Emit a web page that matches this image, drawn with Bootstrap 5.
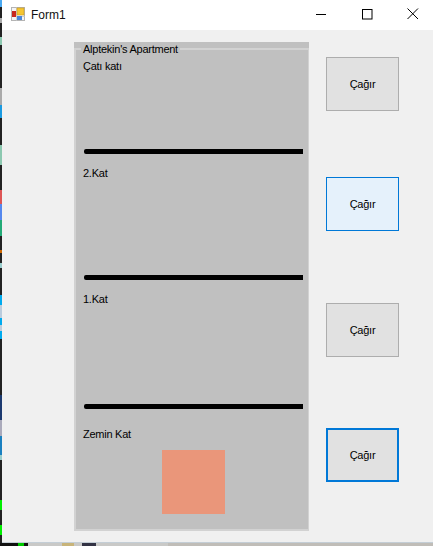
<!DOCTYPE html>
<html lang="tr">
<head>
<meta charset="utf-8">
<title>Form1</title>
<link href="https://cdn.jsdelivr.net/npm/bootstrap@5.3.0/dist/css/bootstrap.min.css" rel="stylesheet">
<style>
html,body{margin:0;height:546px;overflow:hidden;background:#f0f0f0;}
body{font-family:"Liberation Sans",Arial,sans-serif;font-size:11px;color:#000;line-height:13px;letter-spacing:-.25px;}
.shot{width:433px;height:546px;}
.upper{height:543px;flex:none;}
.edge-strip{width:2px;flex:none;background:linear-gradient(180deg,#4aa8f0 0 7px,#222 7px 18px,#aaa 18px 23px,#222 23px 37px,#8cc8b0 37px 45px,#222 45px 88px,#aaa 88px 105px,#1a9ae0 105px 118px,#222 118px 145px,#8cc8b0 145px 165px,#222 165px 190px,#d55 190px 204px,#58e 204px 220px,#2a7 220px 236px,#222 236px 250px,#c60 250px 253px,#222 253px 263px,#9cc 263px 268px,#222 268px 295px,#0ae 295px 305px,#bcd 305px 318px,#0ae 318px 325px,#bcd 325px 331px,#0ae 331px 339px,#222 339px 395px,#1c3a70 395px 420px,#aab 420px 436px,#1a80c0 436px 455px,#9cc 455px 460px,#222 460px 500px,#0e0 500px 510px,#222 510px 525px,#0e0 525px 535px,#222 535px);}
.win{flex:1;min-width:0;border-bottom:1px solid #c4ced6;}
.tbar{height:30px;background:#fff;flex:none;}
.tbar-name{font-size:12px;margin-left:5px;color:#111;letter-spacing:0;}
.tbar-ico{margin:0 0 2px 8px;}
.tbar-ctrls{margin-right:-3px;align-self:flex-start;}
.wbtn{width:46px;height:28px;}
.client{flex:1;background:#f0f0f0;}
.foot-strip{height:3px;flex:none;background:linear-gradient(90deg,#111 0 18px,#0c0 18px 24px,#111 24px 28px,#c9c9c7 28px 62px,#c8b47a 62px 74px,#c9c9c7 74px 82px,#334 82px 96px,#c9c9c7 96px 168px,#c0bdb8 168px);}
.apt{width:235px;height:489px;margin:12px 0 0 72px;background:#c0c0c0;position:relative;flex:none;padding:0 6px 0 8px;}
.apt-frame{position:absolute;inset:6px 0 0 0;border:2px solid #d2d2d2;border-right-width:1px;pointer-events:none;}
.apt-title{position:absolute;left:7px;top:0;padding:0 2px;background:#c0c0c0;line-height:14px;}
.story{display:flex;flex-direction:column;}
.story-a{height:112px;padding-top:18px;}
.story-b{height:126px;padding-top:13px;}
.story-c{height:129px;padding-top:13px;}
.story-d{padding-top:19px;}
.floorline{height:5px;background:#000;border-radius:2px 0 0 2px;margin:auto 0 0 2px;flex:none;}
.floorname{margin-left:1px;}
.lift{width:63px;height:64px;background:#ea967a;margin:9px 0 0 80px;}
.rail{margin-left:17px;width:73px;flex:none;padding-top:27px;}
.callbtn{width:73px;height:54px;background:#e1e1e1;border:1px solid #adadad;font-size:11px;color:#000;padding:0;border-radius:0;display:block;letter-spacing:-.25px;}
.callbtn:hover{background:#e1e1e1;border-color:#adadad;color:#000;}
.call-hot,.call-hot:hover{background:#e5f1fb;border-color:#0078d7;}
.call-focus,.call-focus:hover{border:2px solid #0078d7;}
.gap66{margin-top:66px;}
.gap72{margin-top:72px;}
.gap71{margin-top:71px;}
</style>
</head>
<body>
<div class="shot d-flex flex-column">
  <div class="upper d-flex">
  <div class="edge-strip"></div>
  <div class="win d-flex flex-column">
    <div class="tbar d-flex align-items-center">
      <svg class="tbar-ico" width="16" height="16" viewBox="0 0 16 16"><rect x="1.5" y="1.5" width="13" height="13" fill="#f4f4f4" stroke="#b4b4b4"/><path d="M1.5 5.5H7M6.5 1.5V14.5M6.5 10.5H14.5" stroke="#cfcfcf" fill="none"/><rect x="7" y="2" width="7" height="7" fill="#f5c531" stroke="#c89a20" stroke-width=".6"/><rect x="2" y="5" width="4" height="6" fill="#c8281e"/><rect x="7" y="10" width="5" height="4" fill="#4a86d8"/></svg>
      <span class="tbar-name">Form1</span>
      <div class="tbar-ctrls ms-auto d-flex">
        <div class="wbtn d-flex align-items-center justify-content-center"><svg width="11" height="11" viewBox="0 0 11 11"><path d="M0 5.5H10" stroke="#000" fill="none"/></svg></div>
        <div class="wbtn d-flex align-items-center justify-content-center"><svg width="11" height="11" viewBox="0 0 11 11"><rect x=".5" y=".5" width="9.5" height="9.5" stroke="#000" fill="none"/></svg></div>
        <div class="wbtn d-flex align-items-center justify-content-center"><svg width="12" height="12" viewBox="0 0 12 12"><path d="M.5 .5L11 11M11 .5L.5 11" stroke="#000" fill="none"/></svg></div>
      </div>
    </div>
    <div class="client d-flex">
      <div class="apt">
        <div class="apt-frame"></div>
        <div class="apt-title">Alptekin's Apartment</div>
        <div class="story story-a"><span class="floorname">Çatı katı</span><div class="floorline"></div></div>
        <div class="story story-b"><span class="floorname">2.Kat</span><div class="floorline"></div></div>
        <div class="story story-c"><span class="floorname">1.Kat</span><div class="floorline"></div></div>
        <div class="story story-d"><span class="floorname">Zemin Kat</span><div class="lift"></div></div>
      </div>
      <div class="rail">
        <button type="button" class="btn callbtn">Çağır</button>
        <button type="button" class="btn callbtn call-hot gap66">Çağır</button>
        <button type="button" class="btn callbtn gap72">Çağır</button>
        <button type="button" class="btn callbtn call-focus gap71">Çağır</button>
      </div>
    </div>
  </div>
  </div>
  <div class="foot-strip"></div>
</div>
<script src="https://cdn.jsdelivr.net/npm/bootstrap@5.3.0/dist/js/bootstrap.bundle.min.js"></script>
</body>
</html>
